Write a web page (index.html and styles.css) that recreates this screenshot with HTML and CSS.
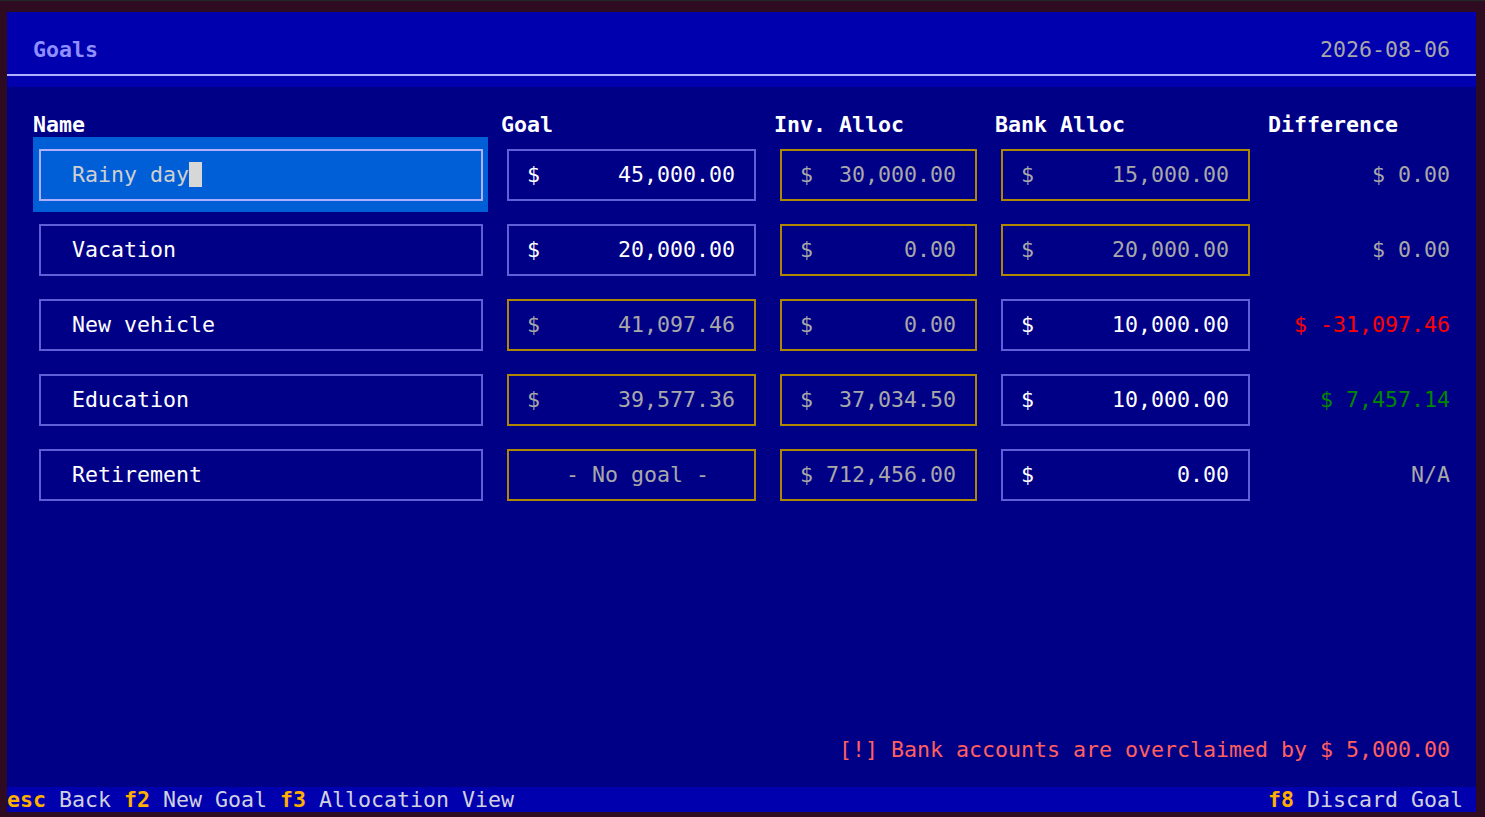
FILE: index.html
```html
<!DOCTYPE html>
<html lang="en">
<head>
<meta charset="UTF-8">
<meta name="viewport" content="width=device-width, initial-scale=1.0">
<title>Goals</title>
<link rel="stylesheet" href="styles.css">
</head>
<body>

<div class="screen">
	<!-- Top bar -->
	<header class="topbar">
		<div class="topbar-row">
			<span class="title">Goals</span>
			<span class="date">2026-08-06</span>
		</div>
		<div class="rule"></div>
	</header>

	<main class="content">
		<div class="goals">
			<div class="col-head">Name</div>
			<div class="col-head">Goal</div>
			<div class="col-head">Inv. Alloc</div>
			<div class="col-head">Bank Alloc</div>
			<div class="col-head">Difference</div>

			<!-- Rainy day -->
			<div class="field name focus"><div class="box"><span>Rainy day</span><span class="cursor"></span></div></div>
			<div class="field money edit"><div class="box"><span>$</span><span>45,000.00</span></div></div>
			<div class="field money calc"><div class="box"><span>$</span><span>30,000.00</span></div></div>
			<div class="field money calc"><div class="box"><span>$</span><span>15,000.00</span></div></div>
			<div class="diff muted">$ 0.00</div>

			<!-- Vacation -->
			<div class="field name"><div class="box"><span>Vacation</span></div></div>
			<div class="field money edit"><div class="box"><span>$</span><span>20,000.00</span></div></div>
			<div class="field money calc"><div class="box"><span>$</span><span>0.00</span></div></div>
			<div class="field money calc"><div class="box"><span>$</span><span>20,000.00</span></div></div>
			<div class="diff muted">$ 0.00</div>

			<!-- New vehicle -->
			<div class="field name"><div class="box"><span>New vehicle</span></div></div>
			<div class="field money calc"><div class="box"><span>$</span><span>41,097.46</span></div></div>
			<div class="field money calc"><div class="box"><span>$</span><span>0.00</span></div></div>
			<div class="field money edit"><div class="box"><span>$</span><span>10,000.00</span></div></div>
			<div class="diff short">$ -31,097.46</div>

			<!-- Education -->
			<div class="field name"><div class="box"><span>Education</span></div></div>
			<div class="field money calc"><div class="box"><span>$</span><span>39,577.36</span></div></div>
			<div class="field money calc"><div class="box"><span>$</span><span>37,034.50</span></div></div>
			<div class="field money edit"><div class="box"><span>$</span><span>10,000.00</span></div></div>
			<div class="diff over">$ 7,457.14</div>

			<!-- Retirement -->
			<div class="field name"><div class="box"><span>Retirement</span></div></div>
			<div class="field money calc nogoal"><div class="box"><span>- No goal -</span></div></div>
			<div class="field money calc"><div class="box"><span>$</span><span>712,456.00</span></div></div>
			<div class="field money edit"><div class="box"><span>$</span><span>0.00</span></div></div>
			<div class="diff muted">N/A</div>
		</div>

		<div class="notice">[!] Bank accounts are overclaimed by $ 5,000.00</div>
	</main>

	<!-- Key bindings -->
	<footer class="keys">
		<div><span class="key">esc</span> Back <span class="key">f2</span> New Goal <span class="key">f3</span> Allocation View</div>
		<div><span class="key">f8</span> Discard Goal</div>
	</footer>
</div>

</body>
</html>
```

FILE: styles.css
```css
* {
	box-sizing: border-box;
}
body {
	margin: 0;
	background-color: #2f0b22;
	border-top: 1px solid #1f2a26;
	font-family: "DejaVu Sans Mono", "Liberation Mono", monospace;
	font-size: 21.6px;
	line-height: 25px;
	color: #ffffff;
	white-space: nowrap;
}
.screen {
	width: 1469px;
	height: 800px;
	margin: 11px 0 0 7px;
	display: flex;
	flex-direction: column;
	background-color: #000087;
}

/* top bar: 3 cells tall, title in the middle row, rule in the last */
.topbar {
	height: 75px;
	padding-top: 25px;
	background-color: #0000af;
}
.topbar-row {
	height: 25px;
	display: flex;
	justify-content: space-between;
	padding: 0 26px;
}
.title {
	color: #8f8fff;
	font-weight: bold;
}
.date {
	color: #a8a8a8;
}
.rule {
	height: 25px;
	display: flex;
	align-items: center;
}
.rule::before {
	content: '';
	flex: 1;
	height: 2px;
	background-color: #afafff;
}

.content {
	flex: 1;
	display: flex;
	flex-direction: column;
	padding: 25px 26px 25px 26px;
}
.goals {
	display: grid;
	grid-template-columns: 455px 260px 208px 260px 182px;
	grid-auto-rows: 75px;
	grid-template-rows: 25px;
	column-gap: 13px;
}
.col-head {
	font-weight: bold;
	height: 25px;
}

/* input widgets: border line runs through the middle of the edge cells */
.field {
	height: 75px;
	padding: 11.5px 5.5px;
}
.field .box {
	height: 100%;
	border: 2px solid #5f5fd7;
	display: flex;
	align-items: center;
	justify-content: space-between;
	padding: 0 18.5px;
}
.field.name .box {
	justify-content: flex-start;
	padding-left: 31.5px;
}
.field.focus {
	background-color: #005fd7;
}
.field.focus .box {
	border-color: #afafff;
	color: #d0d0d0;
}
.cursor {
	display: inline-block;
	width: 13px;
	height: 25px;
	background-color: #d7d7d7;
}
.field.calc .box {
	border-color: #af8700;
	color: #a8a8a8;
}
.field.nogoal .box {
	justify-content: center;
	padding-left: 31.5px;
}

.diff {
	height: 75px;
	display: flex;
	align-items: center;
	justify-content: flex-end;
}
.muted {
	color: #a8a8a8;
}
.short {
	color: #ff0000;
}
.over {
	color: #008700;
}

.notice {
	margin-top: auto;
	height: 25px;
	text-align: right;
	color: #ff5f5f;
}

.keys {
	height: 25px;
	display: flex;
	justify-content: space-between;
	padding-right: 13px;
	background-color: #0000af;
	color: #d0d0e0;
}
.key {
	color: #ffaf00;
	font-weight: bold;
}
```
